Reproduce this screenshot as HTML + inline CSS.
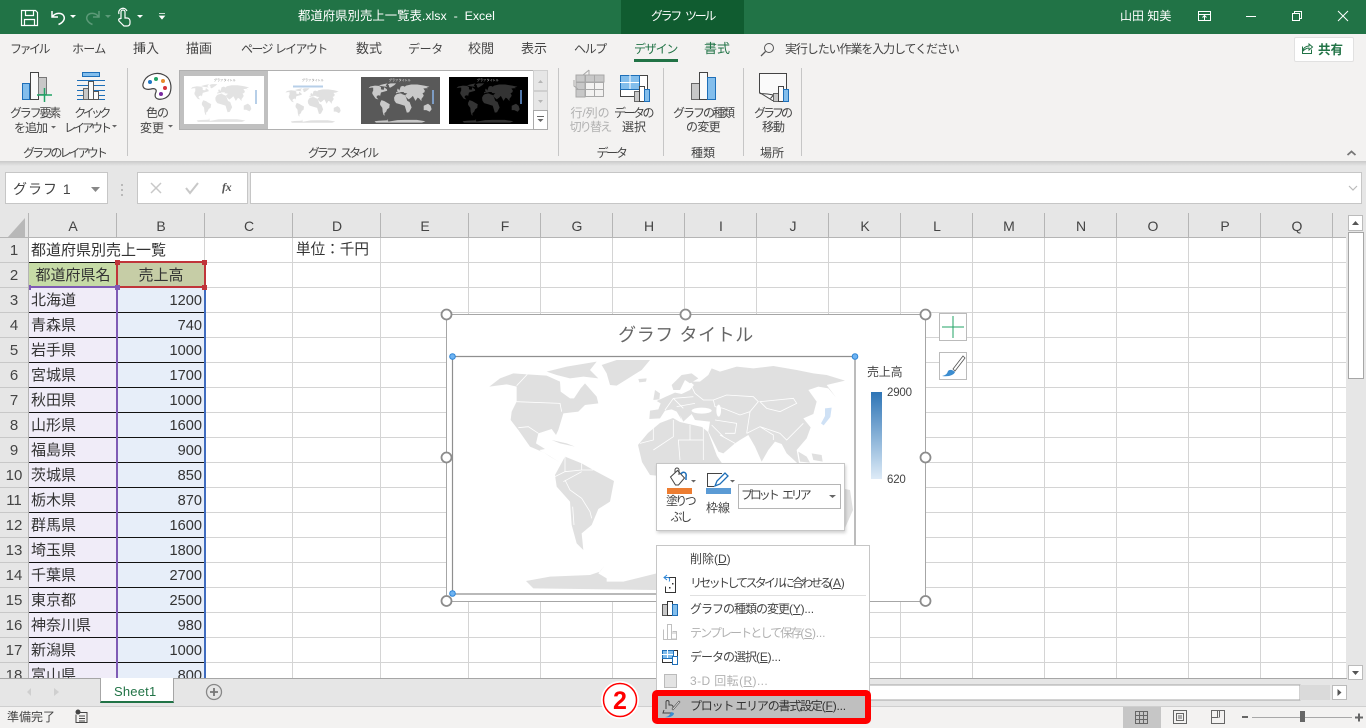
<!DOCTYPE html>
<html lang="ja"><head><meta charset="utf-8"><title>Excel</title>
<style>
html,body{margin:0;padding:0}
body{width:1366px;height:728px;overflow:hidden;position:relative;background:#e6e6e6;font-family:"Liberation Sans","Noto Sans CJK JP",sans-serif;font-size:12px;color:#444}
.p{position:absolute}
.t{position:absolute;white-space:nowrap;line-height:16px;letter-spacing:-.4px}
.k{font-size:13px;letter-spacing:0}
.c{position:absolute;white-space:nowrap;text-align:center;line-height:15px;letter-spacing:-.6px}
.l{color:#b1b1b1}
.w{color:#fff}
svg{position:absolute;overflow:visible}
#rows{position:absolute;left:0;top:238px;width:206px;height:440px;overflow:hidden;font-size:14.6px;color:#333}
.r{height:25px;display:flex;line-height:26px}
.h{width:28px;background:#e6e6e6;border-right:1px solid #b5b5b5;text-align:center;font-size:15px;color:#444;box-shadow:inset 0 -1px #c8c8c8}
.a{width:86px;padding-left:2px;background:#f0ecf8;box-shadow:inset 0 -1px #111;white-space:nowrap;font-size:15px}
.b{width:85px;padding-right:3px;background:#e7eef9;box-shadow:inset 0 -1px #111;text-align:right}
.m{position:absolute;left:690px;white-space:nowrap;line-height:16px;letter-spacing:-.45px;color:#444;font-size:12px}
.m i{font-style:normal;letter-spacing:-.2px}
u{text-decoration:underline}
</style></head><body>

<!-- title bar -->
<div class="p" style="left:0;top:0;width:1366px;height:34px;background:#217346"></div>
<div class="p" style="left:621px;top:0;width:123px;height:34px;background:#105c30"></div>
<div class="t w" style="left:298px;top:8px;letter-spacing:0;font-size:12.4px">都道府県別売上一覧表.xlsx&nbsp; -&nbsp; Excel</div>
<div class="c w" style="left:621px;top:8px;width:123px;line-height:16px;letter-spacing:-2.300px;word-spacing:4px">グラフ ツール</div>
<div class="t w" style="left:1120px;top:8px;letter-spacing:0">山田 知美</div>
<svg style="left:0;top:0" width="1366" height="34" fill="none" stroke="#fff">
<path d="M21.5 10.5h14l2 2v13h-16zM25.5 10.5v5h8v-5M24.5 25.5v-6h10v6" stroke-width="1.2"/>
<path d="M52 11v6h6M52.500 16.500c3-4 9-4 11-1 2 3 0 7-5 9" stroke-width="1.500"/>
<path d="M70 15h6l-3 3z" fill="#fff" stroke="none"/>
<g stroke="#5c9a78"><path d="M99 11v6h-6M98.500 16.500c-3-4-9-4-11-1-2 3 0 7 5 9" stroke-width="1.500"/></g>
<path d="M105 15h6l-3 3z" fill="#5c9a78" stroke="none"/>
<path d="M121 19v-7a2 2 0 0 1 4 0v6h2a3 3 0 0 1 3 3v2c0 2-1 3-3 3h-3l-5-5c-1-2 1-3 2-2M119 14a4 4 0 0 1 8-3" stroke-width="1.200"/>
<path d="M137 15h6l-3 3z" fill="#fff" stroke="none"/>
<path d="M159 13.500h6M159.500 16h5l-2.500 3z" fill="#fff" stroke-width=".8"/>
<path d="M1198.500 11.500h12v9h-12zM1198.500 14.500h12M1204.500 20v-4M1202.500 17.500l2-2 2 2" stroke-width="1"/>
<path d="M1246 16.500h10" stroke-width="1"/>
<path d="M1292.500 13.500h7v7h-7zM1294.500 13.500v-2h7v7h-2" stroke-width="1"/>
<path d="M1338 11l10 10M1348 11l-10 10" stroke-width="1"/>
</svg>

<!-- tabs + ribbon -->
<div class="p" style="left:0;top:34px;width:1366px;height:127px;background:#f3f2f1"></div>
<div class="p" style="left:0;top:161px;width:1366px;height:5px;background:linear-gradient(#c9c9c9,#e6e6e6)"></div>
<div class="t" style="left:10px;top:41px;letter-spacing:-2.5px">ファイル</div>
<div class="t" style="left:72px;top:41px;letter-spacing:-.7px">ホーム</div>
<div class="t k" style="left:133px;top:41px">挿入</div>
<div class="t k" style="left:186px;top:41px">描画</div>
<div class="t" style="left:241px;top:41px;letter-spacing:-1.600px;word-spacing:1px">ページ レイアウト</div>
<div class="t k" style="left:356px;top:41px">数式</div>
<div class="t" style="left:408px;top:41px">データ</div>
<div class="t k" style="left:468px;top:41px">校閲</div>
<div class="t k" style="left:521px;top:41px">表示</div>
<div class="t" style="left:574px;top:41px;letter-spacing:-1.400px">ヘルプ</div>
<div class="t" style="left:634px;top:41px;color:#217346;letter-spacing:-1.200px">デザイン</div>
<div class="t k" style="left:704px;top:41px;color:#217346">書式</div>
<div class="p" style="left:634px;top:59px;width:44px;height:2.500px;background:#217346"></div>
<div class="t" style="left:785px;top:41px;letter-spacing:-1.100px">実行したい作業を入力してください</div>
<div class="p" style="left:1294px;top:37px;width:58px;height:23px;background:#fff;border:1px solid #e1e1e1;border-radius:2px"></div>
<div class="t" style="left:1318px;top:42px;color:#217346;font-weight:bold;font-size:12.500px;letter-spacing:0">共有</div>

<svg style="left:0;top:0" width="1366" height="170" fill="none">
<circle cx="769" cy="48" r="4.500" stroke="#555"/><path d="M765.500 51.500l-4.500 4.500" stroke="#555" stroke-width="1.300"/>
<path d="M1302.500 46.500h-0v7h9v-4M1303 51c0-3 3-5 6-5v-2l3.500 3-3.500 3v-2c-2 0-4 1-6 3z" stroke="#217346"/>
<!-- separators -->
<path d="M127.500 68v88M558.500 68v88M663.500 68v88M743.500 68v88M801.500 68v88" stroke="#c6c6c6"/>
<!-- chart element -->
<rect x="22.500" y="83.500" width="7" height="16" fill="#83beec" stroke="#1e6fb8"/>
<rect x="30.500" y="72.500" width="8" height="27" fill="#fafafa" stroke="#444"/>
<rect x="38.500" y="77.500" width="8" height="17" fill="#c8c8c8" stroke="#777"/>
<path d="M44.500 88v14M37 95h15" stroke="#21a366" stroke-width="1.500"/>
<!-- quick layout -->
<rect x="82.500" y="72.500" width="17" height="4" fill="#83beec" stroke="#1e6fb8"/>
<path d="M77 80.500h28M77 85.500h28M77 90.500h28M77 95.500h28M77 99.500h28" stroke="#1e6fb8"/>
<rect x="83.500" y="88.500" width="5" height="11" fill="#c8c8c8" stroke="#666"/><rect x="88.500" y="81.500" width="5" height="18" fill="#fafafa" stroke="#555"/><rect x="93.500" y="91.500" width="5" height="8" fill="#fafafa" stroke="#555"/>
<!-- palette -->
<path d="M143 84c2-9 13-13 21-9 7 3 8 12 6 18-2 5-8 7-12 6-4-1-3-5-2-7 1-3-2-4-5-3-4 1-9 0-8-5z" fill="#fff" stroke="#444" stroke-width="1.200"/>
<circle cx="150" cy="82" r="2" fill="#1f77c4"/><circle cx="156" cy="79" r="2" fill="#21a366"/><circle cx="163" cy="81" r="2" fill="#e98a2c"/><circle cx="165" cy="88" r="2" fill="#d6323a"/><circle cx="161" cy="94" r="2" fill="#7a2aa0"/>
<path d="M51 126h5l-2.500 2.500zM112 125h5l-2.500 2.500zM168 125h5l-2.500 2.500z" fill="#666"/>
<!-- gallery -->
<rect x="179.500" y="70.500" width="368" height="59" fill="#fff" stroke="#b0b0b0"/>
<rect x="180" y="71" width="88" height="58" fill="#c0c0c0"/><rect x="184" y="76" width="80" height="48" fill="#fff"/>
<rect x="272" y="77" width="80" height="46" fill="#fff"/>
<rect x="361" y="77" width="79" height="47" fill="#595959"/>
<rect x="449" y="77" width="79" height="47" fill="#000"/>
<rect x="533.500" y="70.500" width="14" height="20" fill="#e6e6e6" stroke="#cfcfcf"/>
<rect x="533.500" y="91.500" width="14" height="19" fill="#e6e6e6" stroke="#cfcfcf"/>
<rect x="533.500" y="110.500" width="14" height="19" fill="#fff" stroke="#aaa"/>
<path d="M538 83l2.500-3 2.500 3zM538 100l2.500 3 2.500-3z" fill="#b5b5b5"/><path d="M537 116.500h7" stroke="#666"/><path d="M537.500 119h6l-3 3z" fill="#666"/>
<!-- row/col switch (disabled) -->
<g stroke="#a8a8a8"><rect x="576.500" y="75.500" width="27" height="21" fill="#f3f2f1"/><rect x="576" y="75" width="9" height="7" fill="#c8c8c8"/><rect x="585" y="75" width="19" height="7" fill="#c8c8c8"/><rect x="576" y="82" width="9" height="15" fill="#c8c8c8"/><path d="M576.500 82.500h27M576.500 89.500h27M585.500 75.500v21M594.500 75.500v21"/><path d="M583 75l6-5M589 70v5h-5M574 80v6l4 3" fill="none"/></g>
<!-- select data -->
<rect x="620.500" y="75.500" width="27" height="21" fill="#fff" stroke="#444"/>
<rect x="620.500" y="75.500" width="19" height="14" fill="#83beec" stroke="#1e6fb8"/><path d="M620 82.500h19M630 75v14" stroke="#fff"/>
<rect x="634.500" y="91.500" width="5" height="10" fill="#c8c8c8" stroke="#666"/><rect x="639.500" y="86.500" width="5" height="15" fill="#fff" stroke="#444"/><rect x="644.500" y="89.500" width="5" height="12" fill="#83beec" stroke="#1e6fb8"/>
<!-- change type -->
<rect x="691.500" y="83.500" width="8" height="16" fill="#c8c8c8" stroke="#666"/><rect x="699.500" y="72.500" width="8" height="27" fill="#fafafa" stroke="#444"/><rect x="707.500" y="77.500" width="8" height="22" fill="#83beec" stroke="#1e6fb8"/>
<!-- move -->
<path d="M759.500 73.500h27v27h-14l-13-8z" fill="#fafafa" stroke="#444"/><path d="M759.500 93.500l8 .5 6 1-3 3.500" stroke="#444"/>
<rect x="773.500" y="93.500" width="5" height="8" fill="#c8c8c8" stroke="#666"/><rect x="778.500" y="86.500" width="5" height="15" fill="#fafafa" stroke="#444"/><rect x="783.500" y="89.500" width="5" height="12" fill="#83beec" stroke="#1e6fb8"/>
<!-- collapse -->
<path d="M1347.500 155l4-3.500 4 3.500" stroke="#777" stroke-width="1.800"/>
</svg>

<div class="c" style="left:0;top:106px;width:69px;letter-spacing:-2.2px">グラフ要素</div>
<div class="t" style="left:14px;top:120px;letter-spacing:-1px">を追加</div>
<div class="c" style="left:61px;top:106px;width:60px;letter-spacing:-3.600px">クイック</div>
<div class="t" style="left:64px;top:120px;letter-spacing:-3px">レイアウト</div>
<div class="c" style="left:135px;top:106px;width:44px;letter-spacing:-1px">色の</div>
<div class="t" style="left:140px;top:120px;letter-spacing:0">変更</div>
<div class="c l" style="left:565px;top:106px;width:50px;letter-spacing:-.1px">行/列の</div>
<div class="c l" style="left:565px;top:120px;width:50px;letter-spacing:-1.800px">切り替え</div>
<div class="c" style="left:610px;top:106px;width:46px;letter-spacing:-2.500px">データの</div>
<div class="c" style="left:611px;top:120px;width:46px;letter-spacing:0">選択</div>
<div class="c" style="left:668px;top:106px;width:70px;letter-spacing:-2px">グラフの種類</div>
<div class="c" style="left:668px;top:120px;width:70px;letter-spacing:-.7px">の変更</div>
<div class="c" style="left:748px;top:106px;width:48px;letter-spacing:-3px">グラフの</div>
<div class="c" style="left:749px;top:120px;width:48px;letter-spacing:-1px">移動</div>
<div class="c" style="left:4px;top:146px;width:120px;letter-spacing:-2.900px">グラフのレイアウト</div>
<div class="c" style="left:282px;top:146px;width:120px;letter-spacing:-3px;word-spacing:5px">グラフ スタイル</div>
<div class="c" style="left:581px;top:146px;width:60px;letter-spacing:-2.300px">データ</div>
<div class="c" style="left:673px;top:146px;width:60px;letter-spacing:0">種類</div>
<div class="c" style="left:742px;top:146px;width:60px;letter-spacing:0">場所</div>

<!-- gallery thumbnails -->
<svg width="0" height="0" style="left:0;top:0"><defs><symbol id="map" viewBox="485 358 375 232">
<path d="M490 388L500 378 527 373 550 375 562 381 562 395 578 398 581 383 597 395 598 403 583 407 562 413 558 430 557 435 552 428 538 433 537 443 545 448 540 450 552 458 558 462 547 455 530 447 518 430 512 420 512 412 517 402 517 385 507 385z"/>
<path d="M550 372L575 365 600 360 590 372 598 380 580 378 565 376zM602 365L617 360 650 360 640 370 617 385 610 383 608 372z"/>
<path d="M557 473L565 457 582 463 593 470 613 481 610 502 598 510 592 525 582 533 583 548 577 543 572 525 570 502 557 485z"/>
<path d="M650 418L650 410 660 408 655 400 660 390 664 394 668 402 677 378 690 375 700 380 708 373 737 367 773 367 813 373 843 380 827 385 835 397 827 388 808 390 817 403 813 413 803 417 810 430 807 437 797 450 797 463 783 447 775 443 762 462 755 447 747 433 737 443 723 453 708 440 703 428 715 418 693 415 697 410 670 410 683 420 690 426 672 414 660 414z"/>
<path d="M638 443L645 430 653 423 673 418 703 430 715 462 728 468 740 500 725 528 712 530 700 490 675 482 650 475 640 460z"/>
<path d="M810 490L835 478 850 490 856 510 845 525 825 515 810 515z"/>
<path d="M525 580L550 577 590 575 605 573 598 565 605 582 657 573 700 572 770 572 820 580 800 588 533 588z"/>
</symbol></defs></svg>
<svg style="left:190px;top:83px" width="62" height="40" fill="#e3e3e3"><use href="#map" width="62" height="40"/></svg>
<svg style="left:284px;top:88px" width="58" height="35" fill="#e0e0e0"><use href="#map" width="58" height="35"/></svg>
<svg style="left:366px;top:83px" width="68" height="40" fill="#c9c9c9"><use href="#map" width="68" height="40"/></svg>
<svg style="left:454px;top:83px" width="68" height="40" fill="#333"><use href="#map" width="68" height="40"/></svg>
<svg style="left:0;top:0" width="600" height="130" font-size="3" font-family="Noto Sans CJK JP">
<text x="214" y="81" fill="#888">グラフ タイトル</text><text x="302" y="81" fill="#888">グラフ タイトル</text><text x="389" y="81" fill="#eee">グラフ タイトル</text><text x="477" y="81" fill="#bbb">グラフ タイトル</text>
<rect x="255" y="90" width="2" height="14" fill="#b7cfe8"/><rect x="293" y="85.500" width="30" height="2" fill="#b7cfe8"/><rect x="432" y="90" width="2" height="14" fill="#7d9cc4"/><rect x="520" y="90" width="2" height="14" fill="#4f75a8"/>
</svg>

<!-- formula bar -->
<div class="p" style="left:5px;top:172px;width:101px;height:30px;background:#fff;border:1px solid #c6c6c6"></div>
<div class="t" style="left:13px;top:181px;letter-spacing:1px;font-size:14px;color:#444">グラフ 1</div>
<div class="p" style="left:137px;top:172px;width:109px;height:30px;background:#fff;border:1px solid #c6c6c6"></div>
<div class="p" style="left:250px;top:172px;width:1110px;height:30px;background:#fff;border:1px solid #c6c6c6"></div>
<svg style="left:0;top:170px" width="1366" height="44" fill="none">
<path d="M91 17h9l-4.500 5z" fill="#888"/>
<path d="M122 14v2M122 19v2M122 24v2" stroke="#aaa" stroke-width="1.500"/>
<path d="M151 13l10 10M161 13l-10 10" stroke="#c8c8c8" stroke-width="1.500"/>
<path d="M186 18l4 5 8-10" stroke="#c8c8c8" stroke-width="2"/>
<path d="M1349 16l4 4 4-4" stroke="#bbb" stroke-width="1.200"/>
</svg>
<div class="t" style="left:222px;top:179px;font-family:'Liberation Serif',serif;font-style:italic;font-weight:bold;font-size:12px;color:#555">fx</div>

<!-- column headers -->
<div class="p" style="left:0;top:213px;width:1346px;height:25px;background:#e6e6e6;border-bottom:1px solid #b5b5b5;box-sizing:border-box"></div>
<svg style="left:0;top:213px" width="1346" height="25" fill="none">
<path d="M25 5v19H8z" fill="#b8b8b8"/>
<path d="M28.500 0v25M116.500 0v25M204.500 0v25M292.500 0v25M380.500 0v25M468.500 0v25M540.500 0v25M612.500 0v25M684.500 0v25M756.500 0v25M828.500 0v25M900.500 0v25M972.500 0v25M1044.500 0v25M1116.500 0v25M1188.500 0v25M1260.500 0v25M1332.500 0v25" stroke="#b5b5b5"/>
<g font-family="Liberation Sans" font-size="14" fill="#444" text-anchor="middle">
<text x="73" y="18">A</text><text x="161" y="18">B</text><text x="249" y="18">C</text><text x="337" y="18">D</text><text x="425" y="18">E</text><text x="505" y="18">F</text><text x="577" y="18">G</text><text x="649" y="18">H</text><text x="721" y="18">I</text><text x="793" y="18">J</text><text x="865" y="18">K</text><text x="937" y="18">L</text><text x="1009" y="18">M</text><text x="1081" y="18">N</text><text x="1153" y="18">O</text><text x="1225" y="18">P</text><text x="1297" y="18">Q</text></g>
</svg>

<!-- sheet grid -->
<div class="p" style="left:29px;top:238px;width:1317px;height:440px;background:#fff repeating-linear-gradient(to bottom,transparent 0 24px,#d4d4d4 24px 25px)"></div>
<svg style="left:0;top:238px" width="1346" height="440" fill="none">
<path d="M204.500 0v440M292.500 0v440M380.500 0v440M468.500 0v440M540.500 0v440M612.500 0v440M684.500 0v440M756.500 0v440M828.500 0v440M900.500 0v440M972.500 0v440M1044.500 0v440M1116.500 0v440M1188.500 0v440M1260.500 0v440M1332.500 0v440" stroke="#d4d4d4"/>
</svg>

<div id="rows">
<div class="r"><div class="h">1</div><div class="a" style="background:#fff;box-shadow:inset 0 -1px #111;overflow:visible">都道府県別売上一覧</div><div class="b" style="background:transparent;box-shadow:none"></div></div>
<div class="r"><div class="h">2</div><div class="a" style="background:#c6dba6;text-align:center;padding:0;width:88px">都道府県名</div><div class="b" style="background:#c6cda6;text-align:center;padding:0;width:88px;font-size:15px">売上高</div></div>
<div class="r"><div class="h">3</div><div class="a">北海道</div><div class="b">1200</div></div>
<div class="r"><div class="h">4</div><div class="a">青森県</div><div class="b">740</div></div>
<div class="r"><div class="h">5</div><div class="a">岩手県</div><div class="b">1000</div></div>
<div class="r"><div class="h">6</div><div class="a">宮城県</div><div class="b">1700</div></div>
<div class="r"><div class="h">7</div><div class="a">秋田県</div><div class="b">1000</div></div>
<div class="r"><div class="h">8</div><div class="a">山形県</div><div class="b">1600</div></div>
<div class="r"><div class="h">9</div><div class="a">福島県</div><div class="b">900</div></div>
<div class="r"><div class="h">10</div><div class="a">茨城県</div><div class="b">850</div></div>
<div class="r"><div class="h">11</div><div class="a">栃木県</div><div class="b">870</div></div>
<div class="r"><div class="h">12</div><div class="a">群馬県</div><div class="b">1600</div></div>
<div class="r"><div class="h">13</div><div class="a">埼玉県</div><div class="b">1800</div></div>
<div class="r"><div class="h">14</div><div class="a">千葉県</div><div class="b">2700</div></div>
<div class="r"><div class="h">15</div><div class="a">東京都</div><div class="b">2500</div></div>
<div class="r"><div class="h">16</div><div class="a">神奈川県</div><div class="b">980</div></div>
<div class="r"><div class="h">17</div><div class="a">新潟県</div><div class="b">1000</div></div>
<div class="r"><div class="h">18</div><div class="a">富山県</div><div class="b">800</div></div>
</div>
<div class="t" style="left:296px;top:242px;font-size:14.600px;letter-spacing:0;color:#333">単位：千円</div>

<!-- selection borders -->
<svg style="left:0;top:237px" width="210" height="441" fill="none">
<path d="M117 50v391" stroke="#7f5bb5" stroke-width="2"/>
<path d="M30 50h87" stroke="#7f5bb5" stroke-width="2"/>
<path d="M205 50v391" stroke="#3f6cbf" stroke-width="2"/>
<rect x="117" y="25" width="88" height="25" stroke="#c0353a" stroke-width="2"/>
<rect x="115" y="23" width="5" height="5" fill="#c0353a"/><rect x="202" y="23" width="5" height="5" fill="#c0353a"/><rect x="202" y="48" width="5" height="5" fill="#c0353a"/>
<rect x="115" y="48" width="5" height="5" fill="#7f5bb5"/><rect x="29" y="48" width="2" height="5" fill="#7f5bb5"/>
</svg>

<!-- sheet tabs area -->
<div class="p" style="left:0;top:678px;width:1347px;height:29px;background:#e6e6e6;border-top:1px solid #a6a6a6;box-sizing:border-box"></div>
<div class="p" style="left:1347px;top:213px;width:19px;height:494px;background:#e6e6e6"></div>
<div class="p" style="left:100px;top:678px;width:72px;height:23px;background:#fff;border:1px solid #a6a6a6;border-top:0;border-bottom:2px solid #217346"></div>
<div class="t" style="left:114px;top:684px;color:#217346;font-size:13px;letter-spacing:.2px">Sheet1</div>
<svg style="left:0;top:678px" width="1366" height="30" fill="none">
<path d="M31 10v8l-4-4zM54 10v8l5-4z" fill="#cfcfcf"/>
<circle cx="214" cy="14" r="7.500" stroke="#888" stroke-width="1.300"/><path d="M214 10v8M210 14h8" stroke="#777" stroke-width="1.800"/>
<rect x="843" y="7" width="457" height="15" fill="#fff" stroke="#a6a6a6"/>
<rect x="1300" y="7" width="30" height="15" fill="#dadada"/>
<rect x="1332.500" y="7.500" width="14" height="14" fill="#fff" stroke="#bbb"/><path d="M1337.500 11v7l4-3.500z" fill="#555"/>
</svg>

<!-- v scrollbar -->
<svg style="left:0;top:213px" width="1366" height="470" fill="none">
<rect x="1348.500" y="2.500" width="14" height="15" fill="#fff" stroke="#bbb"/><path d="M1352 12l3.500-4 3.500 4z" fill="#555"/>
<rect x="1348.500" y="19.500" width="15" height="146" fill="#fff" stroke="#a6a6a6"/>
<rect x="1348.500" y="452.500" width="14" height="14" fill="#fff" stroke="#bbb"/><path d="M1352 458h7l-3.500 4z" fill="#555"/>
</svg>

<!-- status bar -->
<div class="p" style="left:0;top:706px;width:1366px;height:22px;background:#f3f2f1;border-top:1px solid #cfcfcf;box-sizing:border-box"></div>
<div class="t" style="left:7px;top:709px;letter-spacing:0">準備完了</div>
<div class="p" style="left:1123px;top:707px;width:38px;height:21px;background:#c6c6c6"></div>
<svg style="left:0;top:707px" width="1366" height="21" fill="none">
<circle cx="78" cy="5" r="2.500" fill="#444"/><path d="M77 5.500h10v10H76v-8" stroke="#444"/><path d="M79 9h6M79 11.500h6M79 14h6" stroke="#444"/>
<path d="M1135.500 4.500h12v12h-12zM1139.500 4.500v12M1143.500 4.500v12M1135.500 8.500h12M1135.500 12.500h12" stroke="#666"/>
<path d="M1173.500 3.500h13v13h-13zM1176.500 6.500h7v7h-7zM1178 9h4M1178 11h4" stroke="#666"/>
<path d="M1211.500 3.500h13v13h-13zM1211.500 10.500h6v-7M1217.500 10.500h1M1219.500 3.500v7" stroke="#666"/>
<path d="M1242 10h6" stroke="#666" stroke-width="2"/>
<path d="M1252 10.500h100" stroke="#a8a8a8"/>
<rect x="1300" y="4" width="5" height="11" fill="#666"/>
<path d="M1355 10.500h8M1359 6.500v8" stroke="#666" stroke-width="2"/>
</svg>

<!-- chart -->
<div class="p" style="left:446px;top:314px;width:478px;height:286px;background:#fff;border:1.500px solid #a6a6a6"></div>
<svg style="left:0;top:0" width="1366" height="728" fill="none">
<!-- Americas, Antarctica -->
<g transform="translate(450 355) scale(.33333)">
<g fill="#e0e0e0">
<path d="M118 95L150 70 190 55 232 58 290 62 330 80 332 110 360 130 372 130 392 100 405 85 440 125 445 145 405 150 385 170 340 175 325 225 318 240 305 222 265 235 258 265 285 282 270 285 310 310 330 322 300 305 275 290 240 275 205 225 182 195 185 170 200 140 200 95 170 88Z"/>
<path d="M290 50L350 35 440 20 420 45 445 70 400 65 360 70 320 60Z"/>
<path d="M455 30L500 15 600 15 575 45 500 92 480 90 470 55Z"/>
<path d="M565 72L590 70 588 80 568 82Z"/>
<path d="M305 255L350 265 375 275 330 265Z"/>
<path d="M315 360L345 305 395 325 430 345 492 378 480 440 445 462 425 510 395 535 400 585 380 565 365 510 360 440 320 395Z"/>
<path d="M228 678L300 665 420 660 450 650 465 630 445 655 470 670 470 680 520 680 620 655 620 705 250 700Z"/>
</g>
<g stroke="#fff" stroke-width="2.400">
<path d="M200 140L330 145 335 170M232 58L200 92M205 218L235 215 265 235M270 285L305 310"/>
<path d="M345 305L345 350 315 365M345 350L395 345 430 345M345 375L360 405 395 430 420 470 425 490M368 455L372 510M340 380L395 350M395 325L395 345"/>
</g>
</g>
<!-- Eurasia, Africa -->
<g transform="translate(640 340) scale(.33333)">
<g fill="#e0e0e0">
<path d="M28 237L30 212 55 208 62 190 50 183 78 170 105 158 125 162 150 150 162 135 150 125 180 125 205 105 215 85 240 95 290 80 340 85 400 78 470 90 520 100 560 105 615 122 580 130 560 135 588 172 565 145 535 140 505 150 530 185 520 222 490 235 512 262 500 295 470 330 478 375 440 340 425 312 405 305 385 330 365 365 345 320 325 285 300 300 285 310 250 340 235 335 205 275 210 245 165 240 155 222 130 245 120 225 125 240 110 215 95 208 75 212 60 235Z"/>
<path d="M100 150L95 135 125 105 155 100 175 115 150 130 135 120 120 150Z"/>
<path d="M45 150L60 160 58 178 40 180Z"/>
<path d="M-6 315L24 279 60 249 99 234 120 246 186 261 204 276 231 348 246 370 180 420 30 405 6 366Z"/>
<path d="M475 335L500 350 510 368 480 365ZM515 340L545 345 548 365 520 360Z"/>
</g>
<ellipse cx="185" cy="212" rx="30" ry="9" fill="#fff"/>
<ellipse cx="236" cy="212" rx="7" ry="18" fill="#fff"/>
<path d="M555 205l20-2-4 28-20 25-8-6 12-22z" fill="#cfe1f5"/>
<g stroke="#fff" stroke-width="2.400">
<path d="M220 180L260 165 340 170 355 185 330 215 300 225 250 205 225 200ZM360 185L460 175 470 190 420 215 380 205ZM150 130L165 160 190 180 220 180"/>
<path d="M225 240L290 250 285 280 255 280M320 280L360 260 400 285 400 300M360 260L420 280 440 300 490 250M75 210L100 175 160 170M110 200L165 190M100 175L130 205M330 215L320 280"/>
<path d="M40 250L40 300 0 310M100 240L100 290 40 330M150 255L150 300 115 300 120 360M190 300L150 300M190 262L190 360M240 285L285 310M215 255L250 290"/>
</g>
</g>
<path d="M840 488L850 490 853 510 845 528 838 520z" fill="#e0e0e0"/>
<path d="M452.500 356.500H855V545M452.500 356.500V594H656" stroke="#8f8f8f" stroke-width="1.200"/>
<g fill="#fff" stroke="#8c8c8c" stroke-width="1.800">
<circle cx="446.500" cy="314.500" r="5"/><circle cx="685.500" cy="314.500" r="5"/><circle cx="925.500" cy="314.500" r="5"/><circle cx="446.500" cy="457.500" r="5"/><circle cx="925.500" cy="457.500" r="5"/><circle cx="446.500" cy="601" r="5"/><circle cx="925.500" cy="601" r="5"/></g>
<g fill="#6eb3f2" stroke="#2f86d6"><circle cx="452.500" cy="356.500" r="2.800"/><circle cx="855" cy="356.500" r="2.800"/><circle cx="452.500" cy="593.500" r="2.800"/></g>
<defs><linearGradient id="lg" x1="0" y1="0" x2="0" y2="1"><stop offset="0" stop-color="#2e75b6"/><stop offset="1" stop-color="#deebf7"/></linearGradient></defs>
<rect x="871" y="392" width="11" height="87" fill="url(#lg)"/>
<!-- floating buttons -->
<rect x="939.500" y="313.500" width="27" height="27" fill="#fff" stroke="#bbb"/><path d="M953 316v22M942 327h22" stroke="#21a366"/>
<rect x="939.500" y="352.500" width="27" height="27" fill="#fff" stroke="#bbb"/>
<path d="M963 356l-10 13 2 2 10-13z" fill="#fff" stroke="#555" stroke-width=".8"/>
<path d="M942 376c4-1 5-2 6-5 2-2 5-1 7 1-1 3-6 5-13 4z" fill="#3c8dd0"/>
</svg>
<div class="c" style="left:446px;top:323px;width:480px;font-size:18px;letter-spacing:.6px;line-height:24px;color:#666">グラフ タイトル</div>
<div class="t" style="left:867px;top:364px;letter-spacing:-.2px">売上高</div>
<div class="t" style="left:887px;top:385px;font-size:11.500px;letter-spacing:-.2px">2900</div>
<div class="t" style="left:887px;top:472px;font-size:11.500px;letter-spacing:-.2px">620</div>

<!-- mini toolbar -->
<div class="p" style="left:656px;top:463px;width:187px;height:66px;background:#fff;border:1px solid #c6c6c6;box-shadow:1px 2px 3px rgba(0,0,0,.18)"></div>
<div class="p" style="left:738px;top:484px;width:101px;height:23px;background:#fff;border:1px solid #b5b5b5"></div>
<div class="t" style="left:741px;top:487px;color:#444;letter-spacing:-3.100px;word-spacing:5px">プロット エリア</div>
<div class="c" style="left:660px;top:494px;width:40px;letter-spacing:-2.700px">塗りつ</div>
<div class="c" style="left:660px;top:510px;width:40px;letter-spacing:-2.500px">ぶし</div>
<div class="c" style="left:699px;top:501px;width:38px;letter-spacing:0">枠線</div>
<svg style="left:0;top:0" width="1366" height="728" fill="none">
<path d="M670.500 477l7-6.500 7 7.500-6 7h-3zM675 473v-3a2 2 0 0 1 4 0v5" stroke="#444"/><path d="M681 474c2-3 6-2 5 3v3" stroke="#1e6fb8" stroke-width="1.500"/>
<rect x="667" y="488" width="25" height="6" fill="#ed7d31"/>
<path d="M691 480h5l-2.500 2.500zM730 480h5l-2.500 2.500zM829 495h7l-3.500 3z" fill="#666"/>
<path d="M722 473.500H707.500v13H714" stroke="#444"/><path d="M715 486l2-5 8-8 3 3-8 8z" fill="#fff" stroke="#1e6fb8" stroke-width="1.300"/>
<rect x="706" y="488" width="25" height="6" fill="#5b9bd5"/>
</svg>

<!-- context menu -->
<div class="p" style="left:656px;top:545px;width:212px;height:155px;background:#fff;border:1px solid #c6c6c6"></div>
<div class="m" style="top:551px;letter-spacing:0">削除(<u>D</u>)</div>
<div class="m" style="top:575px;letter-spacing:-2.700px">リセットしてスタイルに合わせる<i>(<u>A</u>)</i></div>
<div class="m" style="top:601px;letter-spacing:-1px">グラフの種類の変更<i>(<u>Y</u>)...</i></div>
<div class="m" style="top:625px;color:#b1b1b1;letter-spacing:-1.900px">テンプレートとして保存<i>(<u>S</u>)...</i></div>
<div class="m" style="top:649px;letter-spacing:-1px">データの選択<i>(<u>E</u>)...</i></div>
<div class="m" style="top:673px;color:#b1b1b1;letter-spacing:.4px">3-D 回転(<u>R</u>)...</div>
<div class="p" style="left:652px;top:690px;width:207px;height:22px;background:#bfbfbf;border:6px solid #f00;border-radius:5px"></div>
<div class="m" style="top:698px;color:#333;letter-spacing:-1.200px">プロット エリアの書式設定<i>(<u>F</u>)...</i></div>
<svg style="left:0;top:0" width="1366" height="728" fill="none">
<path d="M690 595.500h176" stroke="#e0e0e0"/>
<path d="M665.500 577.500h10v15h-10v-6" stroke="#333"/><path d="M667 575l-3 2.500 3 2.500M664 577.500h4c2 0 2 3 1 4" stroke="#2f86d6"/>
<rect x="672" y="583" width="1.500" height="1.500" fill="#333"/><rect x="669" y="587" width="1.500" height="1.500" fill="#333"/>
<rect x="662.500" y="604.500" width="5" height="11" fill="#c8c8c8" stroke="#555"/><rect x="667.500" y="601.500" width="5" height="14" fill="#fff" stroke="#333"/><rect x="672.500" y="604.500" width="5" height="11" fill="#83beec" stroke="#1e6fb8"/>
<g stroke="#c0c0c0"><path d="M663.500 629.500v10h13v-8h-4M667.500 639.500v-15h4v15M671.500 633h5v6h-5z"/></g>
<rect x="662.500" y="650.500" width="15" height="12" fill="#fff" stroke="#333"/><rect x="662.500" y="650.500" width="11" height="8" fill="#83beec" stroke="#1e6fb8"/><path d="M662 654.500h11M667.500 650v8" stroke="#fff"/><rect x="672.500" y="656.500" width="5" height="8" fill="#fff" stroke="#1e6fb8"/>
<path d="M664.500 674.500h12v13h-12z" fill="#e3e3e3" stroke="#bbb"/>
<path d="M666 709v-7a1.500 1.500 0 0 1 3 0v3h2a2 2 0 0 1 2 2v2M664 710l-1 3h10" stroke="#444"/>
<path d="M679 701l-7 8 1 1 7-8z" fill="#fff" stroke="#555" stroke-width=".7"/>
<path d="M665 717c3 0 5-2 6-5l3 1c0 3-4 5-9 4z" fill="#3c8dd0"/>
</svg>

<!-- annotation number -->
<svg style="left:600px;top:680px" width="40" height="40">
<circle cx="20" cy="20" r="19" fill="#fff"/>
<circle cx="20" cy="20" r="16.500" fill="#fff" stroke="#f00" stroke-width="1.500"/>
<text x="20" y="29" text-anchor="middle" font-family="Liberation Sans" font-weight="bold" font-size="25" fill="#f00">2</text>
</svg>
</body></html>
